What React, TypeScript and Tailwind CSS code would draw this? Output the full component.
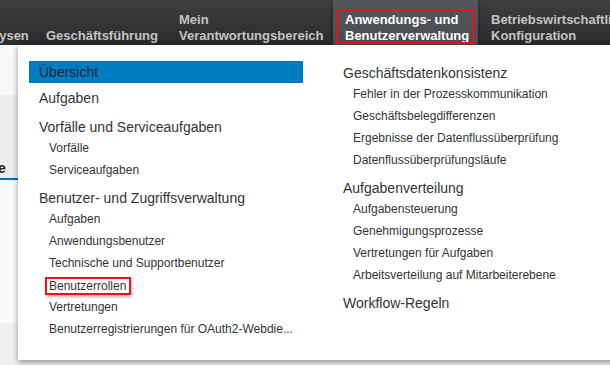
import React from "react";

const Header = ({ children, mt = "mt-[7px]" }: { children: React.ReactNode; mt?: string }) => (
  <div className={`${mt} h-[20px] leading-[20px] pl-[10px] text-[14px] text-[#333] whitespace-nowrap`}>{children}</div>
);

const Sub = ({ children }: { children: React.ReactNode }) => (
  <div className="h-[22px] leading-[22px] pl-[20px] text-[12px] text-[#333] whitespace-nowrap">{children}</div>
);

export default function App() {
  return (
    <div className="relative w-[610px] h-[365px] overflow-hidden bg-white font-['Liberation_Sans',Arial,sans-serif]">
      {/* top navigation bar */}
      <nav className="h-[45px] flex items-stretch whitespace-nowrap bg-gradient-to-b from-[#3f3f3f] to-[#2b2b2b] text-[13px] font-bold leading-[16px] text-[#c4c4c4]">
        <div className="shrink-0 w-[65px] -ml-[29px] flex flex-col justify-end pb-[1px]">Analysen</div>
        <div className="shrink-0 w-[133px] pl-[10px] flex flex-col justify-end pb-[1px]">Geschäftsführung</div>
        <div className="shrink-0 w-[164px] pl-[10px] flex flex-col justify-end pb-[1px]">
          <span>Mein</span>
          <span>Verantwortungsbereich</span>
        </div>
        <div className="relative shrink-0 w-[145px] pl-[12px] flex flex-col justify-end pb-[1px] bg-gradient-to-b from-[#55585a] to-[#4a4d4f] text-white shadow-[0_2px_4px_rgba(0,0,0,0.45)]">
          <span>Anwendungs- und</span>
          <span>Benutzerverwaltung</span>
          <span className="absolute left-[3px] top-[9px] w-[138px] h-[35px] border-2 border-[#e8121b]" />
        </div>
        <div className="shrink-0 pl-[13px] flex flex-col justify-end pb-[1px]">
          <span>Betriebswirtschaftliche</span>
          <span>Konfiguration</span>
        </div>
      </nav>

      {/* underlying page content */}
      <div className="flex flex-col h-[320px]">
        <div className="h-[50px] bg-[#f8f8f8]" />
        <div className="h-[85px] bg-[#ececec] flex flex-col justify-end">
          <div className="h-[20px] leading-[20px] text-[14px] font-bold text-[#222] -ml-[2px]">e</div>
          <div className="h-[2px] bg-[#0a6ebd] w-[40px]" />
        </div>
        <div className="h-[143px] bg-[#fafafa]" />
        <div className="flex-1 bg-[#efefef]" />
      </div>

      {/* dropdown panel */}
      <div className="absolute left-[18px] top-[45px] w-[610px] h-[315px] bg-white shadow-[0_2px_6px_rgba(0,0,0,0.4)]">
        <div className="flex pt-[16px] pl-[11px]">
          <div className="w-[274px] flex flex-col">
            <div className="h-[22px] leading-[22px] pl-[10px] text-[14px] bg-[#007cc0] text-[#1a2634]">Übersicht</div>
            <Header mt="mt-[5px]">Aufgaben</Header>
            <Header mt="mt-[9px]">Vorfälle und Serviceaufgaben</Header>
            <Sub>Vorfälle</Sub>
            <Sub>Serviceaufgaben</Sub>
            <Header>Benutzer- und Zugriffsverwaltung</Header>
            <Sub>Aufgaben</Sub>
            <Sub>Anwendungsbenutzer</Sub>
            <Sub>Technische und Supportbenutzer</Sub>
            <div className="h-[22px] pl-[20px] flex items-center text-[12px] text-[#333] whitespace-nowrap">
              <span className="inline-block mt-[1px] leading-[14px] border-2 border-[#e8121b] pl-[2px] pr-[3px] -ml-[4px] shadow-[1px_2px_3px_rgba(0,0,0,0.3)]">Benutzerrollen</span>
            </div>
            <Sub>Vertretungen</Sub>
            <Sub>Benutzerregistrierungen für OAuth2-Webdie...</Sub>
          </div>
          <div className="ml-[30px] flex flex-col">
            <Header mt="mt-[2px]">Geschäftsdatenkonsistenz</Header>
            <Sub>Fehler in der Prozesskommunikation</Sub>
            <Sub>Geschäftsbelegdifferenzen</Sub>
            <Sub>Ergebnisse der Datenflussüberprüfung</Sub>
            <Sub>Datenflussüberprüfungsläufe</Sub>
            <Header>Aufgabenverteilung</Header>
            <Sub>Aufgabensteuerung</Sub>
            <Sub>Genehmigungsprozesse</Sub>
            <Sub>Vertretungen für Aufgaben</Sub>
            <Sub>Arbeitsverteilung auf Mitarbeiterebene</Sub>
            <Header>Workflow-Regeln</Header>
          </div>
        </div>
      </div>
    </div>
  );
}
